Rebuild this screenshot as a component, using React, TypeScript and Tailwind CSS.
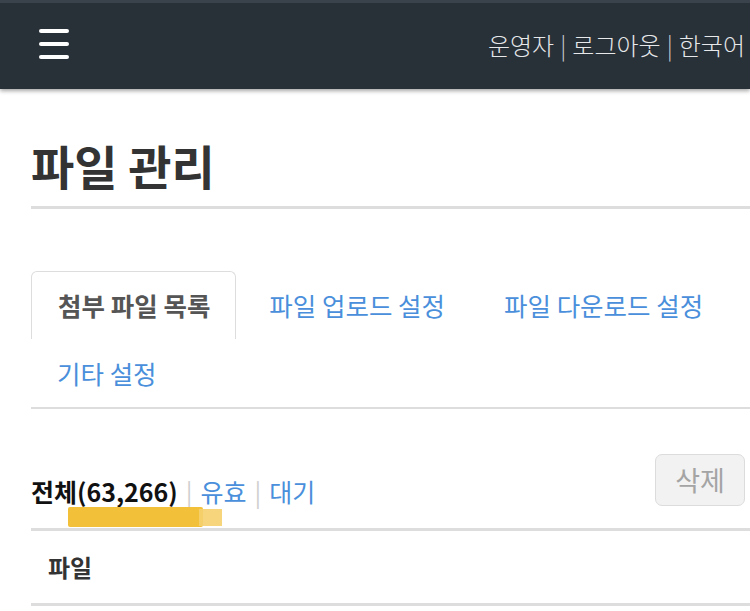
const FONT = '"Noto Sans CJK KR", "Noto Sans", sans-serif';

const tabs = ["첨부 파일 목록", "파일 업로드 설정", "파일 다운로드 설정", "기타 설정"];

export default function App() {
  return (
    <div className="w-[750px] h-[611px] overflow-hidden bg-white" style={{ fontFamily: FONT }}>
      <header className="h-[89px] bg-[#283038] border-t-[3px] border-[#3a434b] flex items-center justify-between pl-[39px] pr-[5px] shadow-[0_2px_4px_rgba(0,0,0,0.35)] relative z-10">
        <button className="flex flex-col gap-[9px] mt-[-4px]">
          <span className="block w-[30px] h-[4px] rounded-full bg-white" />
          <span className="block w-[30px] h-[4px] rounded-full bg-white" />
          <span className="block w-[30px] h-[4px] rounded-full bg-white" />
        </button>
        <div className="text-[24px] text-[#e6e8ea] font-light flex items-center gap-[6px] mt-[-2px]">
          <span>운영자</span>
          <span className="text-[#c8cbce]">|</span>
          <span>로그아웃</span>
          <span className="text-[#c8cbce]">|</span>
          <span>한국어</span>
        </div>
      </header>

      <main className="pl-[31px]">
        <h1 className="mt-[46px] text-[47px] leading-[60px] font-bold text-[#333] pb-[11px] border-b-[3px] border-[#dddddd]">
          파일 관리
        </h1>

        <div className="mt-[62px] flex flex-wrap border-b-2 border-[#dddddd]">
          {tabs.map((t, i) => (
            <div
              key={t}
              className={
                i === 0
                  ? "h-[68px] pl-[26px] pr-[25px] flex items-center border border-b-0 border-[#dddddd] rounded-t-[6px] text-[25.5px] font-semibold text-[#555]"
                  : "h-[68px] px-[26px] flex items-center text-[25.5px] text-[#4a8fdb] " + (i === 3 ? "" : "ml-[7px]")
              }
            >
              {t}
            </div>
          ))}
        </div>

        <div className="relative mt-[45px] flex items-end justify-between pb-[20px] border-b-[3px] border-[#dddddd]">
          <div className="flex items-center text-[25px] leading-[34px]">
            <span className="font-bold text-[#111]">전체(63,266)</span>
            <span className="text-[#cfcfcf] mx-[8px]">|</span>
            <span className="text-[#4a8fdb]">유효</span>
            <span className="text-[#cfcfcf] mx-[8px]">|</span>
            <span className="text-[#4a8fdb]">대기</span>
          </div>
          <button className="mb-[2px] mr-[5px] w-[90px] h-[52px] rounded-[7px] border border-[#dcdcdc] bg-[#f2f2f2] text-[27px] text-[#a4a4a4]">
            삭제
          </button>
          <div className="absolute left-[37px] top-[53px] h-[20px] w-[135px] bg-[#f3c03a] blur-[0.6px] rounded-[2px]" />
          <div className="absolute left-[168px] top-[55px] h-[17px] w-[23px] bg-[#f6d170] opacity-90 blur-[0.6px]" />
        </div>

        <div className="h-[75px] pl-[17px] flex items-center border-b-[3px] border-[#dddddd] text-[24px] font-bold text-[#333]">
          파일
        </div>
      </main>
    </div>
  );
}
